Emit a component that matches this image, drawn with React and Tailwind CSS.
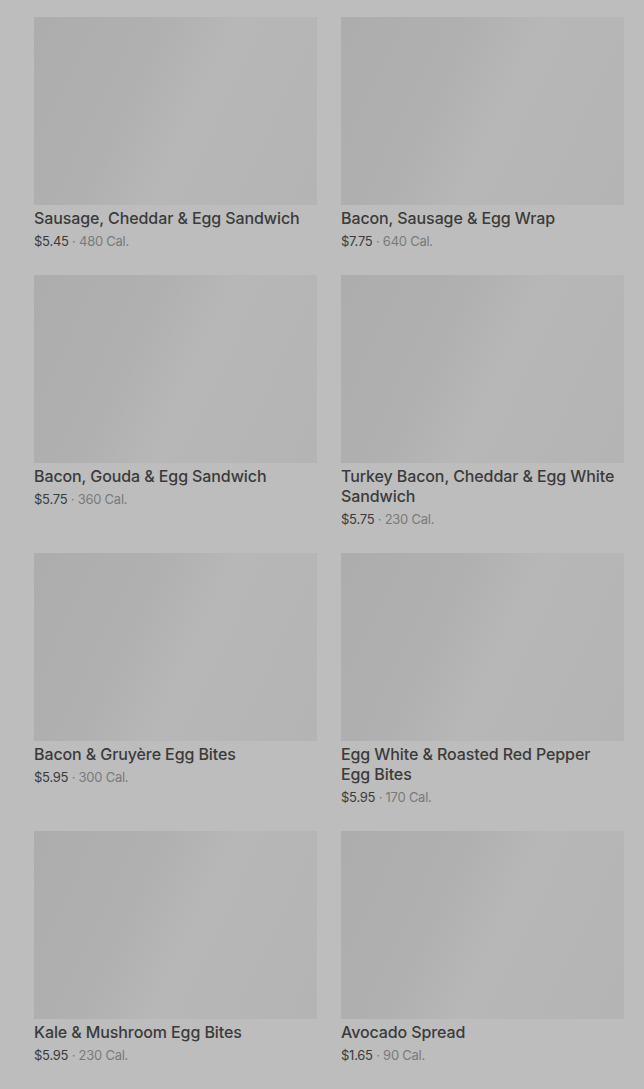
const items = [
  { name: "Sausage, Cheddar & Egg Sandwich", price: "$5.45", cal: "480 Cal." },
  { name: "Bacon, Sausage & Egg Wrap", price: "$7.75", cal: "640 Cal." },
  { name: "Bacon, Gouda & Egg Sandwich", price: "$5.75", cal: "360 Cal." },
  { name: "Turkey Bacon, Cheddar & Egg White Sandwich", price: "$5.75", cal: "230 Cal." },
  { name: "Bacon & Gruyère Egg Bites", price: "$5.95", cal: "300 Cal." },
  { name: "Egg White & Roasted Red Pepper Egg Bites", price: "$5.95", cal: "170 Cal." },
  { name: "Kale & Mushroom Egg Bites", price: "$5.95", cal: "230 Cal." },
  { name: "Avocado Spread", price: "$1.65", cal: "90 Cal." },
];

export default function App() {
  return (
    <div
      className="min-h-screen bg-[#bdbdbd] pl-[34px] pr-[20px] pt-[17px] pb-[24px]"
      style={{ fontFamily: "Inter, 'Liberation Sans', sans-serif" }}
    >
      <div className="grid grid-cols-2 gap-x-[24px] gap-y-[24px]">
        {items.map((it) => (
          <div key={it.name} className="flex flex-col">
            <div className="h-[188px] w-full bg-[linear-gradient(115deg,#adadad_0%,#b0b0b0_35%,#b7b7b7_55%,#b4b4b4_100%)]" />
            <div className="mt-[3px] pr-[4px] text-[16px] leading-[20px] font-medium tracking-[-0.1px] text-[#3b3b3b]">
              {it.name}
            </div>
            <div className="mt-[3px] text-[13px] leading-[20px] tracking-[-0.25px] text-[#3b3b3b]">
              {it.price}
              <span className="text-[#7a7a7a]"> · {it.cal}</span>
            </div>
          </div>
        ))}
      </div>
    </div>
  );
}
